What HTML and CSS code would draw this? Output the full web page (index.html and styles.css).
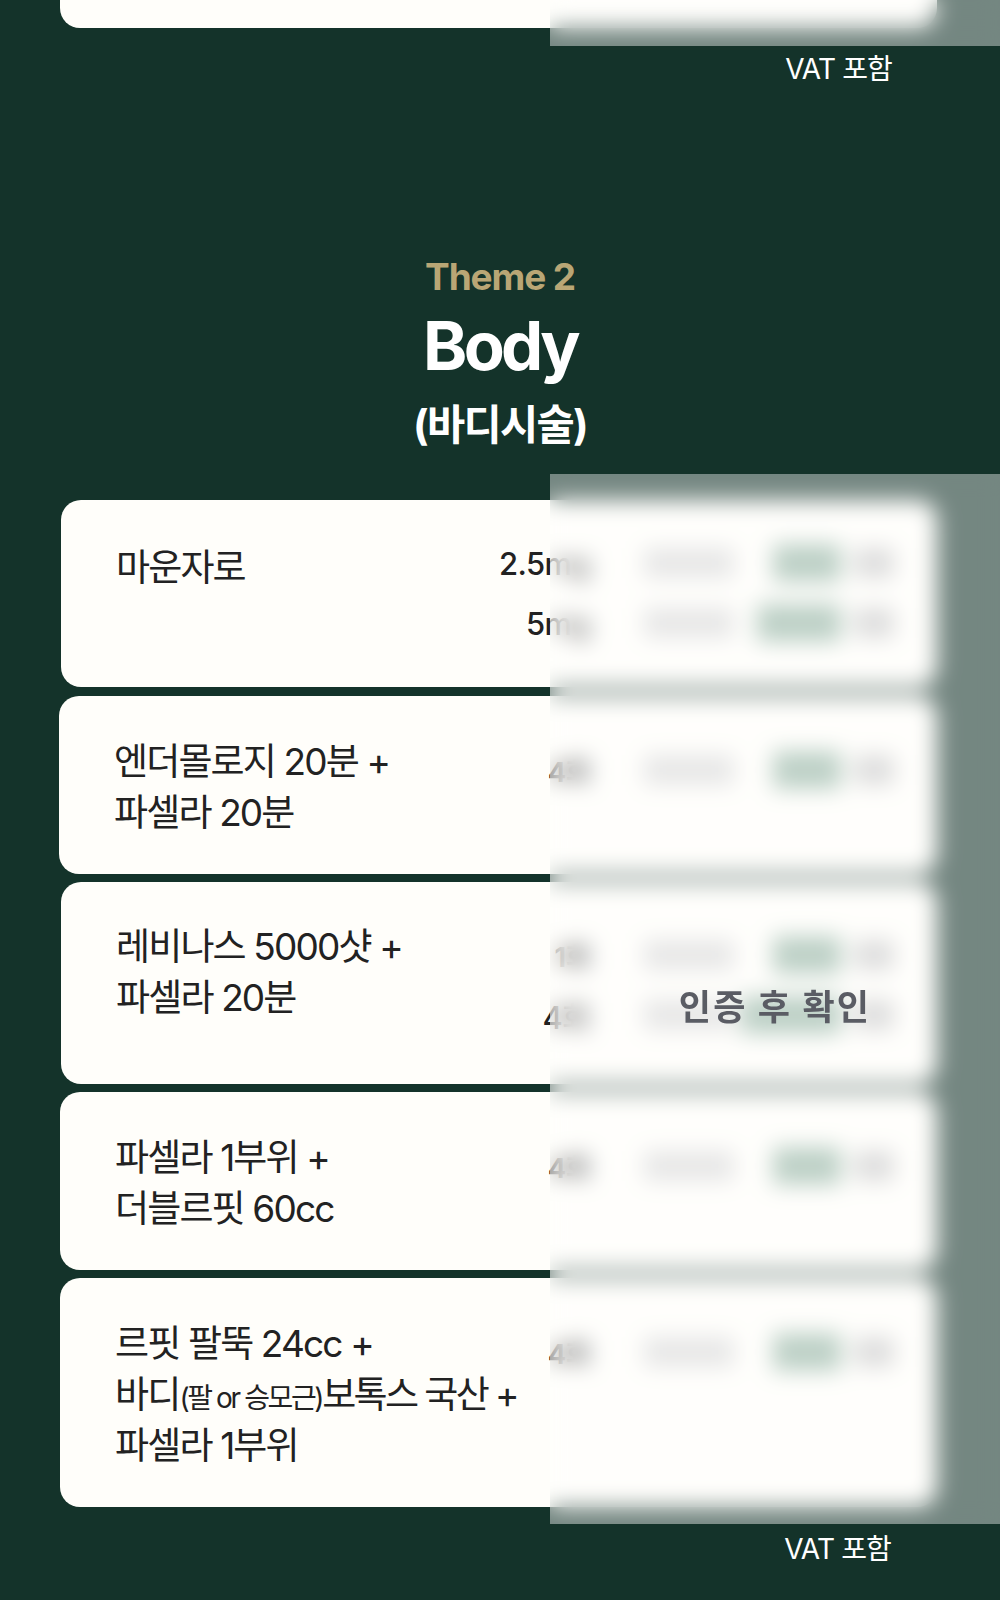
FILE: index.html
```html
<!DOCTYPE html>
<html lang="ko">
<head>
<meta charset="utf-8">
<title>Body</title>
<link rel="stylesheet" href="styles.css">
</head>
<body>
<main class="page">
  <section class="theme theme-stub">
    <div class="list">
      <div class="card card-stub"></div>
      <div class="veil veil-stub"></div>
    </div>
    <p class="vat">VAT 포함</p>
  </section>

  <section class="theme">
    <header class="head">
      <p class="eyebrow">Theme 2</p>
      <h2 class="title">Body</h2>
      <p class="subtitle">(바디시술)</p>
    </header>

    <div class="list">
      <article class="card card-first">
        <h3 class="name">마운자로</h3>
        <div class="prices">
          <div class="row"><span class="dose">2.5mg</span><span class="old"></span><span class="now"></span><span class="unit"></span></div>
          <div class="row"><span class="dose">5mg</span><span class="old"></span><span class="now now-wide"></span><span class="unit"></span></div>
        </div>
      </article>
      <article class="card card-out">
        <h3 class="name">엔더몰로지 20분 +<br>파셀라 20분</h3>
        <div class="prices">
          <div class="row"><span class="dose dose-small">4회</span><span class="old"></span><span class="now"></span><span class="unit"></span></div>
        </div>
      </article>
      <article class="card card-third">
        <h3 class="name">레비나스 5000샷 +<br>파셀라 20분</h3>
        <div class="prices">
          <div class="row"><span class="dose dose-small">1회</span><span class="old"></span><span class="now"></span><span class="unit"></span></div>
          <div class="row"><span class="dose">4회</span><span class="old"></span><span class="now now-wider"></span><span class="unit"></span></div>
        </div>
      </article>
      <article class="card">
        <h3 class="name">파셀라 1부위 +<br>더블르핏 60cc</h3>
        <div class="prices">
          <div class="row"><span class="dose dose-small">4회</span><span class="old"></span><span class="now"></span><span class="unit"></span></div>
        </div>
      </article>
      <article class="card">
        <h3 class="name">르핏 팔뚝 24cc +<br>바디<span class="note">(팔 or 승모근)</span><span class="tight">보톡스 국산 +</span><br>파셀라 1부위</h3>
        <div class="prices">
          <div class="row"><span class="dose dose-small">4회</span><span class="old"></span><span class="now"></span><span class="unit"></span></div>
        </div>
      </article>
      <div class="veil"><span class="veil-label">인증 후 확인</span></div>
    </div>
    <p class="vat vat-last">VAT 포함</p>
  </section>
</main>
</body>
</html>
```
FILE: styles.css
```css
* { box-sizing: border-box; }

html, body { margin: 0; padding: 0; }

body {
  background: #14332a;
  font-family: Inter, "Noto Sans CJK KR", "Noto Sans", sans-serif;
  color: #222;
}

.page {
  width: 1000px;
  height: 1600px;
  overflow: hidden;
  background: #14332a;
}

.list {
  position: relative;
  display: flex;
  flex-direction: column;
  gap: 8px;
  margin-left: 60px;
  width: 877px;
}

.card {
  display: flex;
  justify-content: space-between;
  align-items: flex-start;
  padding: 40px 49px 36px 55px;
  background: #fffefa;
  border-radius: 20px;
}

.card-stub { height: 28px; padding: 0; border-radius: 0 0 20px 20px; }
.card-first { margin-left: 1px; margin-bottom: 1px; padding-top: 33px; padding-bottom: 34px; }
.card-first .name { margin-top: 9px; }
.card-first .prices { margin-top: 0; }
.card-out { margin-left: -1px; }
.card-third { margin-left: 1px; padding-top: 39px; padding-bottom: 39px; }
.card-third .prices { margin-top: 4px; }

.name {
  flex: 0 0 360px;
  min-width: 0;
  margin: 0;
  font-size: 37px;
  font-weight: 400;
  line-height: 51px;
  letter-spacing: -0.05em;
  color: #222;
  white-space: nowrap;
}

.note {
  font-size: 28px;
  line-height: 1;
  letter-spacing: -0.085em;
}

.tight { letter-spacing: -0.07em; }

.prices { margin-top: 4px; flex: none; }

.row {
  display: grid;
  grid-template-columns: 110px 1fr 107px 53px;
  align-items: center;
  width: 408px;
  height: 60px;
  white-space: nowrap;
}

.dose {
  font-size: 31px;
  font-weight: 500;
  letter-spacing: -0.02em;
  text-align: right;
  color: #222;
}

.dose-small { font-size: 27px; font-weight: 700; }

.old {
  width: 90px;
  height: 30px;
  margin-left: 54px;
  background: #d6d6d6;
}

.now {
  justify-self: end;
  width: 68px;
  height: 38px;
  background: #8fb09f;
}

.now-wide { width: 84px; }
.now-wider { width: 100px; }

.unit {
  justify-self: end;
  width: 40px;
  height: 30px;
  background: #c6c6c6;
}

.veil {
  position: absolute;
  top: -26px;
  bottom: -17px;
  left: 490px;
  width: 450px;
  display: flex;
  align-items: center;
  justify-content: center;
  padding-top: 10px;
  background: rgba(255, 255, 255, 0.41);
  backdrop-filter: blur(11px);
}

.veil-stub { top: 0; bottom: -18px; padding: 0; }

.veil-label {
  font-size: 35px;
  font-weight: 700;
  letter-spacing: 0.06em;
  color: #5a5c64;
}

.vat {
  margin: 24px 0 0;
  padding-right: 108px;
  font-size: 28px;
  font-weight: 400;
  line-height: 34px;
  letter-spacing: -0.03em;
  text-align: right;
  color: #fff;
}

.vat-last { margin-top: 25px; padding-right: 109px; }

.theme-stub { height: 254px; }

.head { text-align: center; height: 246px; }

.eyebrow {
  margin: 0;
  font-size: 37px;
  font-weight: 700;
  line-height: 46px;
  letter-spacing: -0.03em;
  color: #b9a675;
}

.title {
  margin: 4px 0 0;
  font-size: 67px;
  font-weight: 700;
  line-height: 84px;
  letter-spacing: -0.055em;
  color: #fff;
}

.subtitle {
  margin: 9px 0 0;
  font-size: 41.5px;
  font-weight: 700;
  line-height: 56px;
  letter-spacing: -0.04em;
  color: #fff;
}
```
